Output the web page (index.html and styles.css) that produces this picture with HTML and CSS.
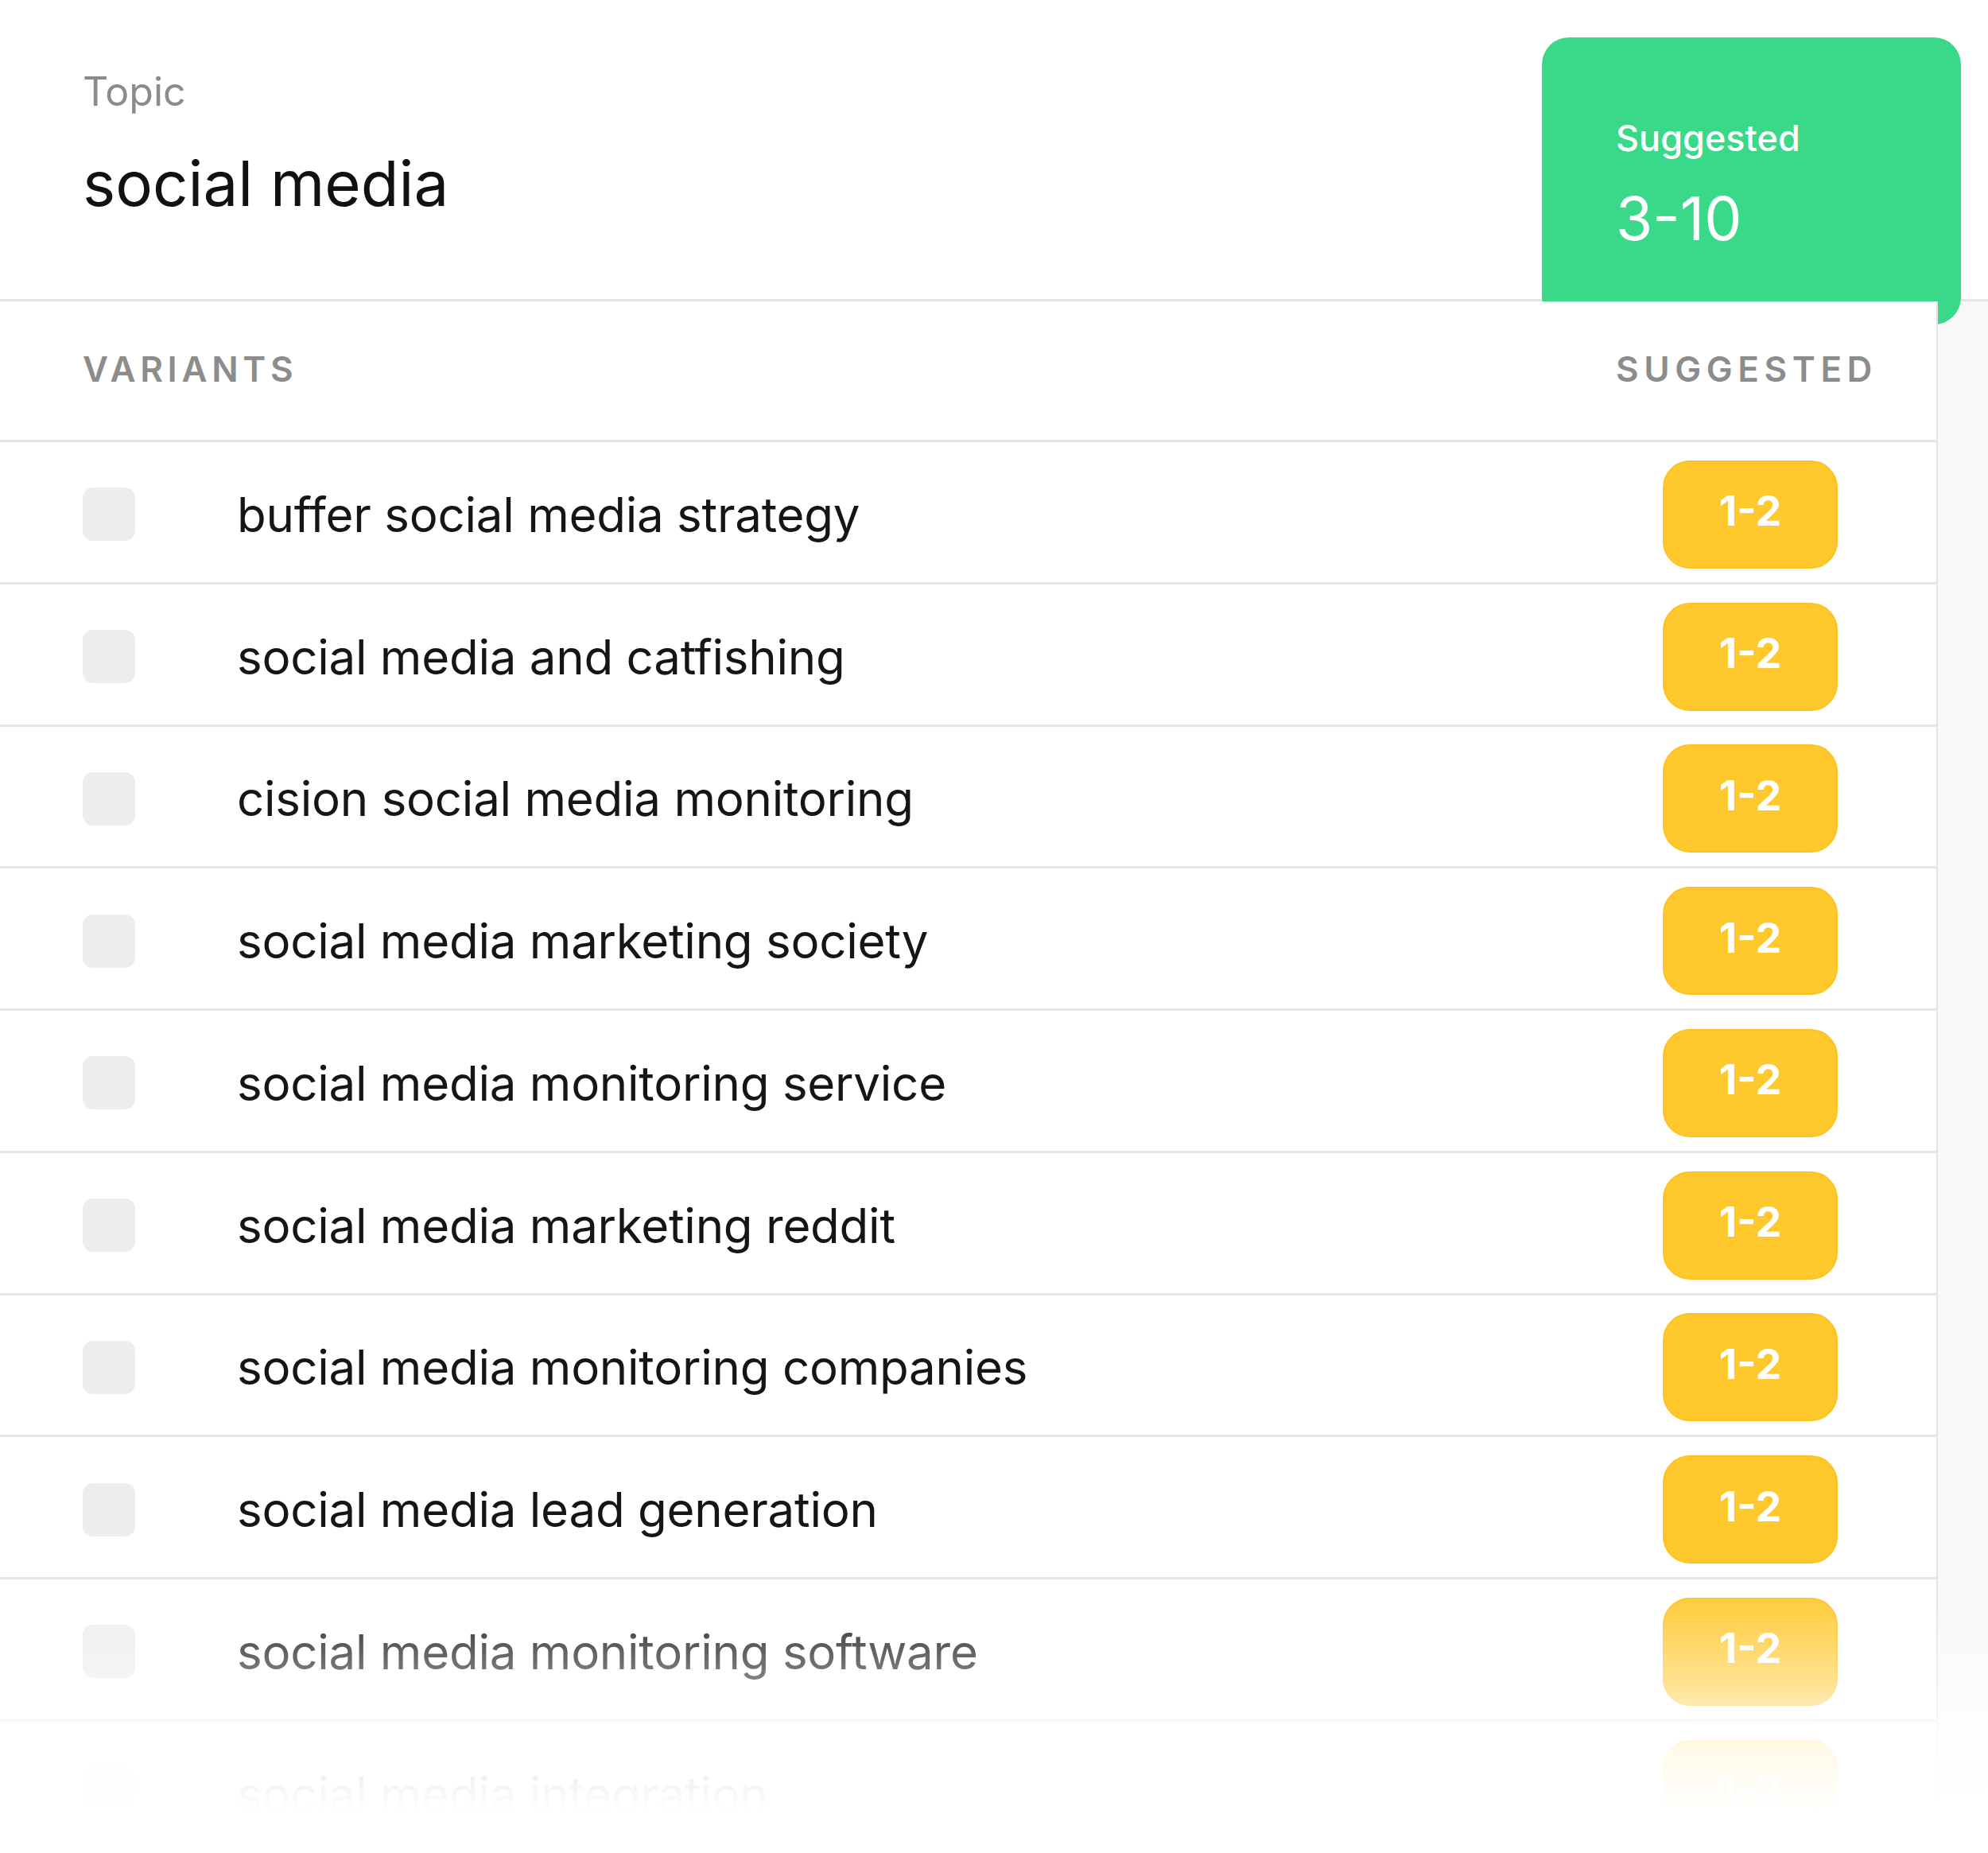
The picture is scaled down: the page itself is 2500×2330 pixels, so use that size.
FILE: index.html
```
<!DOCTYPE html>
<html lang="en">
<head>
<meta charset="utf-8">
<title>Topic variants</title>
<link rel="stylesheet" href="styles.css">
</head>
<body>
<div class="page">
  <header class="topbar">
    <div class="topic">
      <div class="topic-label">Topic</div>
      <div class="topic-name">social media</div>
    </div>
    <div class="suggest-card">
      <div class="sc-label">Suggested</div>
      <div class="sc-value">3-10</div>
    </div>
  </header>
  <div class="content">
    <section class="table">
      <div class="thead">
        <span class="th">VARIANTS</span>
        <span class="th th-right">SUGGESTED</span>
      </div>
      <div class="row"><span class="check"></span><span class="label">buffer social media strategy</span><span class="badge">1-2</span></div>
      <div class="row"><span class="check"></span><span class="label">social media and catfishing</span><span class="badge">1-2</span></div>
      <div class="row"><span class="check"></span><span class="label">cision social media monitoring</span><span class="badge">1-2</span></div>
      <div class="row"><span class="check"></span><span class="label">social media marketing society</span><span class="badge">1-2</span></div>
      <div class="row"><span class="check"></span><span class="label">social media monitoring service</span><span class="badge">1-2</span></div>
      <div class="row"><span class="check"></span><span class="label">social media marketing reddit</span><span class="badge">1-2</span></div>
      <div class="row"><span class="check"></span><span class="label">social media monitoring companies</span><span class="badge">1-2</span></div>
      <div class="row"><span class="check"></span><span class="label">social media lead generation</span><span class="badge">1-2</span></div>
      <div class="row"><span class="check"></span><span class="label">social media monitoring software</span><span class="badge">1-2</span></div>
      <div class="row"><span class="check"></span><span class="label">social media integration</span><span class="badge">1-2</span></div>
    </section>
    <aside class="side"></aside>
  </div>
  <div class="fade"></div>
</div>
</body>
</html>
```
FILE: styles.css
```
html, body {
  margin: 0;
  padding: 0;
  background: #ffffff;
}

.page {
  position: relative;
  width: 2500px;
  height: 2330px;
  overflow: hidden;
  font-family: Inter, "Noto Sans", "Liberation Sans", sans-serif;
  color: #151515;
}

.topbar {
  display: flex;
  justify-content: space-between;
  align-items: flex-start;
  height: 379px;
  box-sizing: border-box;
  border-bottom: 3px solid #e5e5e5;
}

.topic {
  padding: 86px 0 0 104px;
}

.topic-label {
  font-size: 50px;
  line-height: 58px;
  color: #8b8b8b;
}

.topic-name {
  margin-top: 40px;
  font-size: 78px;
  line-height: 94px;
  color: #111111;
}

.suggest-card {
  position: relative;
  z-index: 1;
  flex-shrink: 0;
  box-sizing: border-box;
  width: 527px;
  height: 361px;
  margin: 47px 34px 0 0;
  padding: 98px 0 0 93px;
  border-radius: 34px;
  background: #3ad98a;
  color: #ffffff;
}

.sc-label {
  font-size: 45px;
  line-height: 58px;
  font-weight: 500;
}

.sc-value {
  margin-top: 28px;
  font-size: 75px;
  line-height: 88px;
  font-weight: 400;
}

.content {
  display: flex;
}

.table {
  position: relative;
  z-index: 2;
  box-sizing: border-box;
  width: 2437px;
  flex-shrink: 0;
  background: #ffffff;
  border-right: 2px solid #e3e3e3;
}

.side {
  flex: 1;
  background: #f8f8f8;
}

.thead {
  display: flex;
  justify-content: space-between;
  align-items: center;
  box-sizing: border-box;
  height: 177px;
  padding: 0 74px 4px 104px;
  border-bottom: 3px solid #e5e5e5;
}

.th {
  font-size: 44px;
  font-weight: 600;
  letter-spacing: 0.13em;
  color: #8c8c8c;
}

.th-right {
  letter-spacing: 0.15em;
}

.row {
  display: flex;
  align-items: center;
  box-sizing: border-box;
  height: 178.75px;
  padding: 6px 124px 0 104px;
  border-bottom: 3px solid #e6e6e6;
}

.check {
  width: 66px;
  height: 67px;
  border-radius: 13px;
  background: #ededed;
  flex-shrink: 0;
}

.label {
  margin-left: 128px;
  font-size: 60px;
  line-height: 72px;
  letter-spacing: -0.004em;
  color: #151515;
}

.badge {
  margin-left: auto;
  display: flex;
  align-items: center;
  justify-content: center;
  box-sizing: border-box;
  width: 220px;
  height: 136px;
  padding-bottom: 8px;
  border-radius: 34px;
  background: #ffc82c;
  border: 2px solid #fdc122;
  color: #ffffff;
  font-size: 52px;
  font-weight: 700;
}

.fade {
  position: absolute;
  z-index: 5;
  left: 0;
  right: 0;
  top: 1990px;
  height: 340px;
  background: linear-gradient(to bottom,
    rgba(255, 255, 255, 0) 0%,
    rgba(255, 255, 255, 0.45) 35%,
    rgba(255, 255, 255, 0.9) 62%,
    #ffffff 85%);
}
```
